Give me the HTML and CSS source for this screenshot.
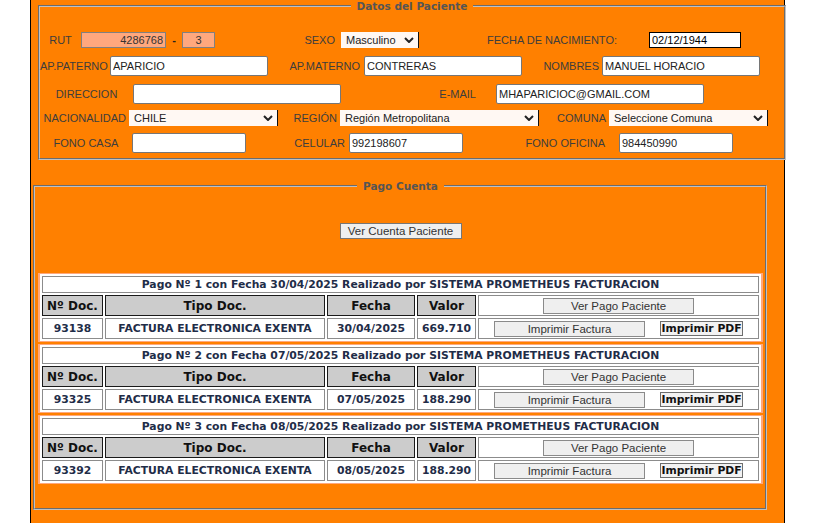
FILE: index.html
```html
<!DOCTYPE html>
<html lang="es">
<head>
<meta charset="utf-8">
<title>Datos del Paciente</title>
<link rel="stylesheet" href="styles.css">
</head>
<body>
<div class="page">
  <fieldset class="fs fs-datos">
    <legend>Datos del Paciente</legend>

    <div class="row r1">
      <span class="lbl ac">RUT</span>
      <input class="inp salmon short tr" type="text" value="4286768">
      <span class="lbl ac dash">-</span>
      <input class="inp salmon short tc" type="text" value="3">
      <span class="lbl ar pr6">SEXO</span>
      <span class="sel">Masculino<svg class="chev" viewBox="0 0 10 6" width="10" height="6"><path d="M1 1 L5 5 L9 1" /></svg></span>
      <span class="lbl ar pr32">FECHA DE NACIMIENTO:</span>
      <input class="inp short focus" type="text" value="02/12/1944">
    </div>

    <div class="row r2">
      <span class="lbl ar pr3">AP.PATERNO</span>
      <input class="inp" type="text" value="APARICIO">
      <span class="lbl ar pr4">AP.MATERNO</span>
      <input class="inp" type="text" value="CONTRERAS">
      <span class="lbl ar pr3">NOMBRES</span>
      <input class="inp" type="text" value="MANUEL HORACIO">
    </div>

    <div class="row r3">
      <span class="lbl ac">DIRECCION</span>
      <input class="inp" type="text" value="">
      <span class="lbl ar pr20">E-MAIL</span>
      <input class="inp" type="text" value="MHAPARICIOC@GMAIL.COM">
    </div>

    <div class="row r4">
      <span class="lbl ar pr3">NACIONALIDAD</span>
      <span class="sel">CHILE<svg class="chev" viewBox="0 0 10 6" width="10" height="6"><path d="M1 1 L5 5 L9 1" /></svg></span>
      <span class="lbl ar pr3">REGIÓN</span>
      <span class="sel">Región Metropolitana<svg class="chev" viewBox="0 0 10 6" width="10" height="6"><path d="M1 1 L5 5 L9 1" /></svg></span>
      <span class="lbl ar pr3">COMUNA</span>
      <span class="sel">Seleccione Comuna<svg class="chev" viewBox="0 0 10 6" width="10" height="6"><path d="M1 1 L5 5 L9 1" /></svg></span>
    </div>

    <div class="row r5">
      <span class="lbl ac">FONO CASA</span>
      <input class="inp" type="text" value="">
      <span class="lbl ar pr4">CELULAR</span>
      <input class="inp" type="text" value="992198607">
      <span class="lbl ar pr14">FONO OFICINA</span>
      <input class="inp" type="text" value="984450990">
    </div>
  </fieldset>

  <fieldset class="fs fs-pago">
    <legend>Pago Cuenta</legend>
    <div class="ver-cuenta">
      <button class="btn btn-cuenta" type="button">Ver Cuenta Paciente</button>
    </div>

    <div class="pagos">
      <div class="pago">
        <table class="pt">
          <colgroup><col class="k1"><col class="k2"><col class="k3"><col class="k4"><col class="k5"></colgroup>
          <tr class="hdr"><td colspan="5">Pago Nº 1 con Fecha 30/04/2025 Realizado por SISTEMA PROMETHEUS FACTURACION</td></tr>
          <tr class="thr"><th>Nº Doc.</th><th>Tipo Doc.</th><th>Fecha</th><th>Valor</th><td><div class="acts"><button class="btn btn-wide" type="button">Ver Pago Paciente</button></div></td></tr>
          <tr class="dtr"><td>93138</td><td>FACTURA ELECTRONICA EXENTA</td><td>30/04/2025</td><td>669.710</td><td><div class="acts"><button class="btn btn-wide" type="button">Imprimir Factura</button><button class="btn btn-pdf" type="button">Imprimir PDF</button></div></td></tr>
        </table>
      </div>
      <div class="pago">
        <table class="pt">
          <colgroup><col class="k1"><col class="k2"><col class="k3"><col class="k4"><col class="k5"></colgroup>
          <tr class="hdr"><td colspan="5">Pago Nº 2 con Fecha 07/05/2025 Realizado por SISTEMA PROMETHEUS FACTURACION</td></tr>
          <tr class="thr"><th>Nº Doc.</th><th>Tipo Doc.</th><th>Fecha</th><th>Valor</th><td><div class="acts"><button class="btn btn-wide" type="button">Ver Pago Paciente</button></div></td></tr>
          <tr class="dtr"><td>93325</td><td>FACTURA ELECTRONICA EXENTA</td><td>07/05/2025</td><td>188.290</td><td><div class="acts"><button class="btn btn-wide" type="button">Imprimir Factura</button><button class="btn btn-pdf" type="button">Imprimir PDF</button></div></td></tr>
        </table>
      </div>
      <div class="pago">
        <table class="pt">
          <colgroup><col class="k1"><col class="k2"><col class="k3"><col class="k4"><col class="k5"></colgroup>
          <tr class="hdr"><td colspan="5">Pago Nº 3 con Fecha 08/05/2025 Realizado por SISTEMA PROMETHEUS FACTURACION</td></tr>
          <tr class="thr"><th>Nº Doc.</th><th>Tipo Doc.</th><th>Fecha</th><th>Valor</th><td><div class="acts"><button class="btn btn-wide" type="button">Ver Pago Paciente</button></div></td></tr>
          <tr class="dtr"><td>93392</td><td>FACTURA ELECTRONICA EXENTA</td><td>08/05/2025</td><td>188.290</td><td><div class="acts"><button class="btn btn-wide" type="button">Imprimir Factura</button><button class="btn btn-pdf" type="button">Imprimir PDF</button></div></td></tr>
        </table>
      </div>
    </div>
  </fieldset>
</div>
</body>
</html>
```

FILE: styles.css
```css
html, body {
  margin: 0;
  padding: 0;
  background: #ffffff;
}

body {
  font-family: "Liberation Sans", Arial, sans-serif;
  font-size: 11px;
  color: #333;
}

.page {
  margin-left: 30px;
  width: 755px;
  min-height: 523px;
  box-sizing: border-box;
  background: #ff8000;
  border-left: 1px solid #000;
  border-right: 1px solid #000;
  padding: 0;
}

/* ---------- fieldsets ---------- */
.fs {
  border: 2px groove #c0c0c0;
  margin: 0;
  min-width: 0;
  box-sizing: border-box;
}

.fs legend {
  margin: 0 auto;
  padding: 0 6px;
  font-family: "DejaVu Sans", Verdana, sans-serif;
  font-weight: bold;
  font-size: 10.5px;
  line-height: 12px;
  color: #555;
}

.fs-datos {
  margin-left: 7px;
  width: 748px;
  padding: 17px 0 1px 0;
}

.fs-pago {
  margin-left: 2px;
  margin-top: 20px;
  width: 734px;
  padding: 0 2px 24px 3px;
}

/* ---------- form rows ---------- */
.row {
  display: grid;
  align-items: center;
}

.r1 { height: 22px; grid-template-columns: 41px 85px 16px 33px 126px 78px 230px 92px; }
.r2 { height: 29px; grid-template-columns: 70px 158px 96px 158px 80px 158px; }
.r3 { height: 27px; grid-template-columns: 93px 208px 155px 208px; }
.r4 { height: 22px; grid-template-columns: 89px 149px 62px 199px 70px 159px; }
.r5 { height: 28px; grid-template-columns: 92px 114px 103px 114px 156px 114px; }

.lbl {
  color: #3d3d3d;
  font-size: 11px;
  white-space: nowrap;
}
.ac { text-align: center; }
.ar { text-align: right; }
.pr3 { padding-right: 3px; }
.pr4 { padding-right: 4px; }
.pr6 { padding-right: 6px; }
.pr14 { padding-right: 14px; }
.pr20 { padding-right: 20px; }
.pr32 { padding-right: 32px; }
.dash { font-weight: bold; color: #222; }

.inp {
  box-sizing: border-box;
  width: 100%;
  height: 20px;
  margin: 0;
  padding: 0 2px;
  border: 1px solid #767676;
  border-radius: 2px;
  background: #fff;
  font-family: "Liberation Sans", Arial, sans-serif;
  font-size: 11px;
  color: #222;
  outline: none;
}
.inp.short { height: 16px; }
.inp.salmon { background: #ffa87e; border-color: #808080; color: #333; border-radius: 0; }
.inp.tr { text-align: right; }
.inp.tc { text-align: center; }
.inp.focus { border-color: #000; border-radius: 0; color: #000; }

.sel {
  box-sizing: border-box;
  height: 16px;
  display: flex;
  align-items: center;
  justify-content: space-between;
  padding: 0 4px 0 5px;
  background: #fff8f3;
  border-right: 1px solid #111;
  font-size: 11px;
  color: #222;
  white-space: nowrap;
}
.chev path {
  fill: none;
  stroke: #222;
  stroke-width: 2;
}

/* ---------- pago cuenta ---------- */
.ver-cuenta {
  display: flex;
  justify-content: center;
  padding: 31px 0 34px 0;
}

.btn {
  box-sizing: border-box;
  height: 16px;
  margin: 0;
  padding: 0;
  background: #efefef;
  border: 1px solid #8a8a8a;
  border-radius: 0;
  font-family: "Liberation Sans", Arial, sans-serif;
  font-size: 11.5px;
  color: #333;
  line-height: 14px;
}
.btn-cuenta { width: 122px; border-color: #767676; }
.btn-wide { width: 151px; }
.btn-pdf {
  width: 83px;
  height: 15px;
  background: #f2f2f2;
  border-color: #6e6e6e;
  font-family: "DejaVu Sans", Verdana, sans-serif;
  font-weight: bold;
  font-size: 10.8px;
  color: #111;
  line-height: 13px;
}

.pagos { display: flex; flex-direction: column; gap: 2px; }

.pago {
  background: #ffa87e;
  padding: 1px 2px;
}

.pt {
  table-layout: fixed;
  width: 721px;
  border-collapse: separate;
  border-spacing: 2px;
  background: #fff;
  font-family: "DejaVu Sans", Verdana, sans-serif;
  font-weight: bold;
  font-size: 10.8px;
  color: #1f2d48;
}
.k1 { width: 61px; }
.k2 { width: 220px; }
.k3 { width: 88px; }
.k4 { width: 59px; }
.k5 { width: 281px; }

.pt td, .pt th {
  padding: 0;
  text-align: center;
  border: 1px solid #8c8c8c;
  white-space: nowrap;
  overflow: hidden;
}
.hdr { height: 17px; }
.thr { height: 21px; }
.dtr { height: 21px; }

.pt th {
  background: #cccccc;
  border-color: #1a1a1a;
  font-size: 12px;
  color: #111;
}

.acts {
  display: flex;
  justify-content: space-evenly;
  align-items: center;
}
```
